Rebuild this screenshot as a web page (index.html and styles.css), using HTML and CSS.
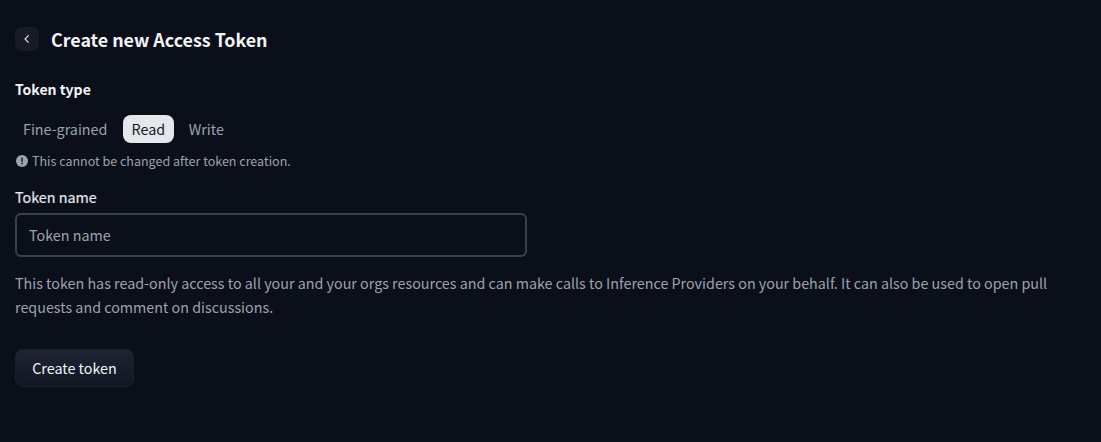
FILE: index.html
```html
<!DOCTYPE html>
<html lang="en">
<head>
<meta charset="utf-8">
<title>Create new Access Token</title>
<link rel="stylesheet" href="styles.css">
</head>
<body>
<main class="page">
  <header class="head">
    <a class="back" href="#" aria-label="Back">
      <svg width="12" height="12" viewBox="0 0 12 12" fill="none"><path d="M7.6 2.4 4 6l3.6 3.6" stroke="#e5e7eb" stroke-width="1.1"/></svg>
    </a>
    <h1 class="title">Create new Access Token</h1>
  </header>
  <h2 class="section">Token type</h2>
  <div class="tabs">
    <span class="tab">Fine-grained</span>
    <span class="tab active">Read</span>
    <span class="tab">Write</span>
  </div>
  <p class="note">
    <svg class="note-icon" width="12" height="12" viewBox="0 0 12 12"><circle cx="6" cy="6" r="6" fill="#9ca3af"/><rect x="5.3" y="2.6" width="1.4" height="4.2" fill="#0b0f19"/><rect x="5.3" y="7.8" width="1.4" height="1.4" fill="#0b0f19"/></svg>
    This cannot be changed after token creation.
  </p>
  <label class="label" for="name">Token name</label>
  <input class="input" id="name" type="text" placeholder="Token name">
  <p class="desc">This token has read-only access to all your and your orgs resources and can make calls to Inference Providers on your behalf. It can also be used to open pull requests and comment on discussions.</p>
  <button class="btn" type="button">Create token</button>
</main>
</body>
</html>
```
FILE: styles.css
```css
* { box-sizing: border-box; }
html, body { margin: 0; height: 100%; }
body {
  background: #0b0f19;
  font-family: "Noto Sans CJK JP", "Noto Sans", sans-serif;
  font-size: 14.32px;
  color: #e5e7eb;
  overflow: hidden;
}
.page { display: flex; flex-direction: column; align-items: flex-start; padding: 27px 15px 0; width: 1080px; }
.head { display: flex; align-items: center; gap: 12px; height: 24px; }
.back {
  width: 24px; height: 24px; border-radius: 7px;
  background: #161b27;
  display: flex; align-items: center; justify-content: center;
}
.title { margin: 0; font-size: 17.85px; line-height: 24px; font-weight: 700; color: #f3f4f6; }
.section { margin: 28px 0 0; font-size: 14px; line-height: 20px; font-weight: 700; color: #f3f4f6; }
.tabs { display: flex; margin-top: 16px; height: 28px; align-items: center; }
.tab { padding: 0 8px; height: 28px; line-height: 28px; color: #9ca3af; border-radius: 8px; }
.tab.active { background: #e5e7eb; color: #111827; padding: 0 8.6px; margin: 0 7px 0 7.6px; }
.note { display: flex; align-items: center; gap: 4px; margin: 8px 0 0; height: 20px; font-size: 12.5px; line-height: 20px; color: #9ca3af; padding-left: 1px; }
.label { margin-top: 16px; line-height: 20px; font-weight: 400; color: #e5e7eb; height: 20px; -webkit-text-stroke: 0.2px #e5e7eb; }
.input {
  margin-top: 6px; width: 512px; height: 44px; padding: 0 12px 2px;
  background: transparent; border: 2px solid #374151; border-radius: 6px;
  font: inherit; color: #e5e7eb; outline: none;
}
.input::placeholder { color: #9ca3af; opacity: 1; }
.desc { margin: 14px 0 0; width: 1060px; line-height: 24px; color: #9ca3af; }
.btn {
  margin-top: 30px; height: 38px; width: 119px; padding: 0 0 2px;
  border: 1px solid #1a202c; border-radius: 8px;
  background: linear-gradient(to top, #111623, #1e2433);
  font: inherit; color: #f3f4f6;
}
```
